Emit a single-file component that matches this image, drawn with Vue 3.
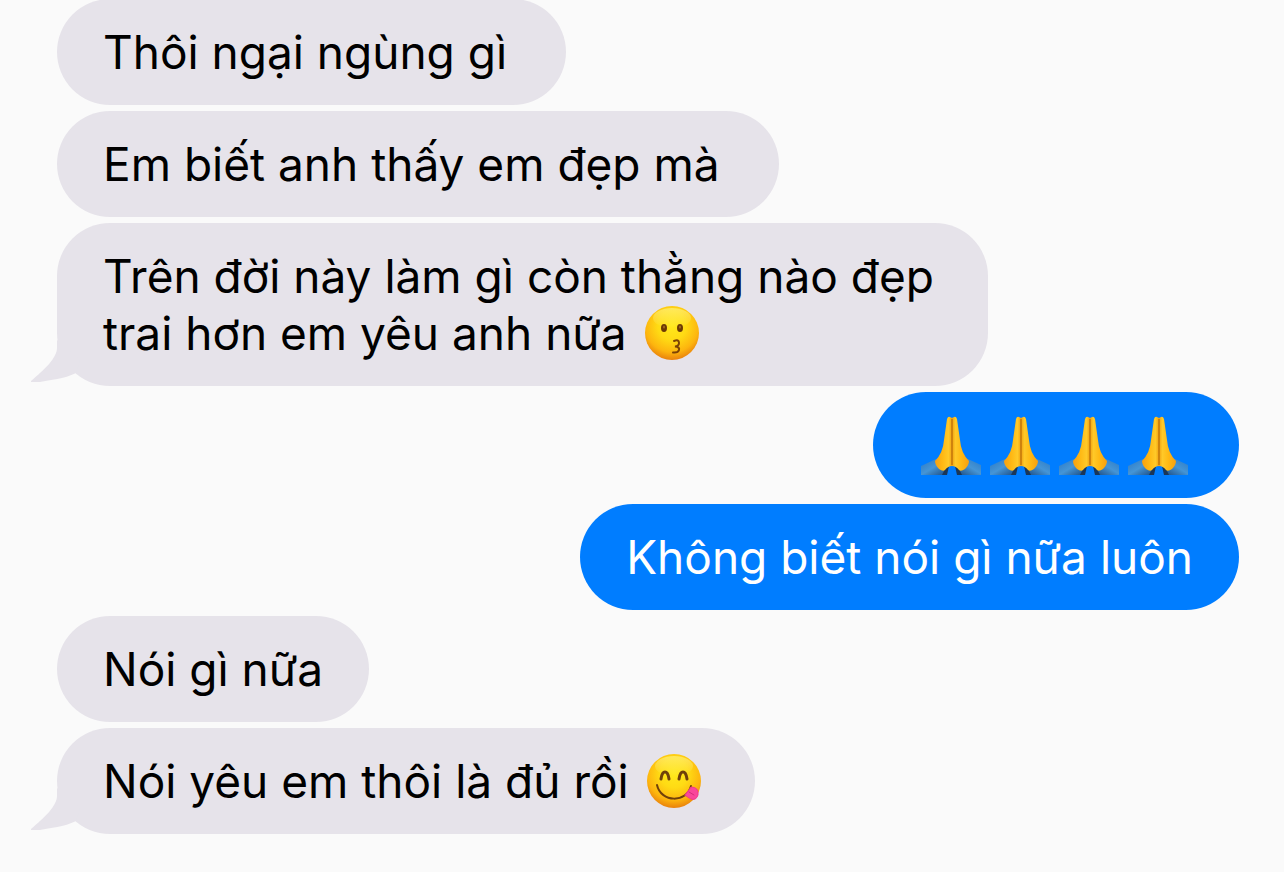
<script setup>
import { ref } from "vue";

const messages = ref([
  { id: 1, from: "them", text: "Thôi ngại ngùng gì " },
  { id: 2, from: "them", text: "Em biết anh thấy em đẹp mà " },
  {
    id: 3,
    from: "them",
    text: "Trên đời này làm gì còn thằng nào đẹp trai hơn em yêu anh nữa ",
    emoji: "kiss",
    tail: true,
  },
  { id: 4, from: "me", hands: 4 },
  { id: 5, from: "me", text: "Không biết nói gì nữa luôn" },
  { id: 6, from: "them", text: "Nói gì nữa" },
  {
    id: 7,
    from: "them",
    text: "Nói yêu em thôi là đủ rồi ",
    emoji: "yum",
    tail: true,
  },
]);
</script>

<template>
  <main class="chat">
    <svg class="defs" width="0" height="0" aria-hidden="true">
      <defs>
        <radialGradient id="face" cx="50%" cy="36%" r="66%">
          <stop offset="0" stop-color="#ffe81c" />
          <stop offset="0.4" stop-color="#ffdb14" />
          <stop offset="0.75" stop-color="#fdb50e" />
          <stop offset="1" stop-color="#e67a0c" />
        </radialGradient>
        <linearGradient id="shine" x1="0" y1="0" x2="0" y2="1">
          <stop offset="0" stop-color="#fff27c" stop-opacity="0.7" />
          <stop offset="1" stop-color="#fff27c" stop-opacity="0" />
        </linearGradient>
        <linearGradient id="palm" x1="0" y1="0" x2="1" y2="0">
          <stop offset="0" stop-color="#f7a010" />
          <stop offset="0.45" stop-color="#ffb914" />
          <stop offset="0.8" stop-color="#ffc928" />
          <stop offset="1" stop-color="#f0a010" />
        </linearGradient>
        <linearGradient id="sleeve" x1="0" y1="0" x2="1" y2="1">
          <stop offset="0" stop-color="#2a78c4" />
          <stop offset="0.5" stop-color="#4595d6" />
          <stop offset="1" stop-color="#1c4a80" />
        </linearGradient>
        <g id="arm">
          <path d="M0 50L15 43L26 54L23 59H0z" fill="url(#sleeve)" />
          <path d="M21 59L24 53L28 50L26 59z" fill="#1a3658" />
          <path
            d="M26 3Q27 0 29 1L31 2V50Q27 50 24 54Q22 56 18 53Q14 49 14 45Q22 37 23 24z"
            fill="url(#palm)"
          />
        </g>
      </defs>
    </svg>

    <div
      v-for="message in messages"
      :key="message.id"
      class="bubble"
      :class="message.from"
    >
      <div v-if="message.hands" class="hands">
        <svg
          v-for="n in message.hands"
          :key="n"
          class="hand"
          viewBox="0 0 60 60"
          role="img"
          aria-label="🙏"
        >
          <use href="#arm" />
          <use href="#arm" transform="translate(62 0) scale(-1 1)" />
          <path d="M31 3V49" stroke="#b86c0a" stroke-width="1.200" />
        </svg>
      </div>
      <p v-else class="text">{{ message.text
        }}<svg
          v-if="message.emoji"
          class="emoji"
          viewBox="0 0 56 56"
          role="img"
          :aria-label="message.emoji === 'kiss' ? '😗' : '😋'"
        >
          <circle cx="28" cy="28" r="27" fill="url(#face)" />
          <ellipse cx="28" cy="13" rx="19" ry="10" fill="url(#shine)" />
          <g v-if="message.emoji === 'kiss'">
            <ellipse cx="20" cy="23" rx="3" ry="4" fill="#6b3905" />
            <ellipse cx="36" cy="23" rx="3" ry="4" fill="#6b3905" />
            <ellipse cx="20" cy="22" rx="1" ry="1.500" fill="#a06a1c" />
            <ellipse cx="36" cy="22" rx="1" ry="1.500" fill="#a06a1c" />
            <path
              d="M30 36Q35 34 35 38Q35 41 31 41.500Q36 42 35 45Q34 48 29 47.500"
              fill="none"
              stroke="#7c4204"
              stroke-width="2"
              stroke-linecap="round"
            />
          </g>
          <g v-else fill="none" stroke="#70400a" stroke-linecap="round">
            <path d="M15 26Q16 19 19 19Q22 19 23 26" stroke-width="3" />
            <path d="M33 26Q34 19 37 19Q40 19 41 26" stroke-width="3" />
            <path d="M11 32C15 50 41 50 45 33" stroke-width="2" />
            <path
              d="M39 42L45 34Q53 34 52 42Q50 48 45 46z"
              fill="#f9479b"
              stroke="#f2388c"
              stroke-width="1"
            />
            <path d="M43 39L48 42" stroke="#d42c7c" stroke-width="1" />
          </g>
        </svg></p>
      <svg v-if="message.tail" class="tail" viewBox="0 0 50 46" aria-hidden="true">
        <path d="M27 0V8C27 18 14 30 1 41V42H10C20 40 34 39 46 33L50 20z" />
      </svg>
    </div>
  </main>
</template>

<style>
body {
  background: #fafafa;
}
</style>

<style scoped>
.chat {
  box-sizing: border-box;
  height: 100vh;
  padding: 0 45px 38px 57px;
  display: flex;
  flex-direction: column;
  justify-content: flex-end;
  gap: 6px;
  overflow: hidden;
  background: #fafafa;
  font-family: Inter, "Noto Sans", sans-serif;
  font-size: 46px;
  line-height: 57px;
}

.defs {
  position: absolute;
}

.bubble {
  position: relative;
  flex-shrink: 0;
  box-sizing: border-box;
  max-width: 931px;
  padding: 25px 46px 24px;
  border-radius: 53px;
}

.them {
  align-self: flex-start;
  background: #e6e3ea;
  color: #000;
}

.me {
  align-self: flex-end;
  background: #007dff;
  color: #fff;
}

.text {
  margin: 0;
  white-space: pre-wrap;
}

.emoji {
  width: 56px;
  height: 56px;
  margin: 0 7px 0 4px;
  vertical-align: -11px;
}

.hands {
  display: flex;
  align-items: center;
  gap: 9px;
  height: 57px;
  padding: 0 5px 0 2px;
}

.hand {
  flex-shrink: 0;
  width: 60px;
  height: 60px;
}

.tail {
  position: absolute;
  left: -27px;
  bottom: 0;
  width: 50px;
  height: 46px;
  fill: #e6e3ea;
}
</style>
